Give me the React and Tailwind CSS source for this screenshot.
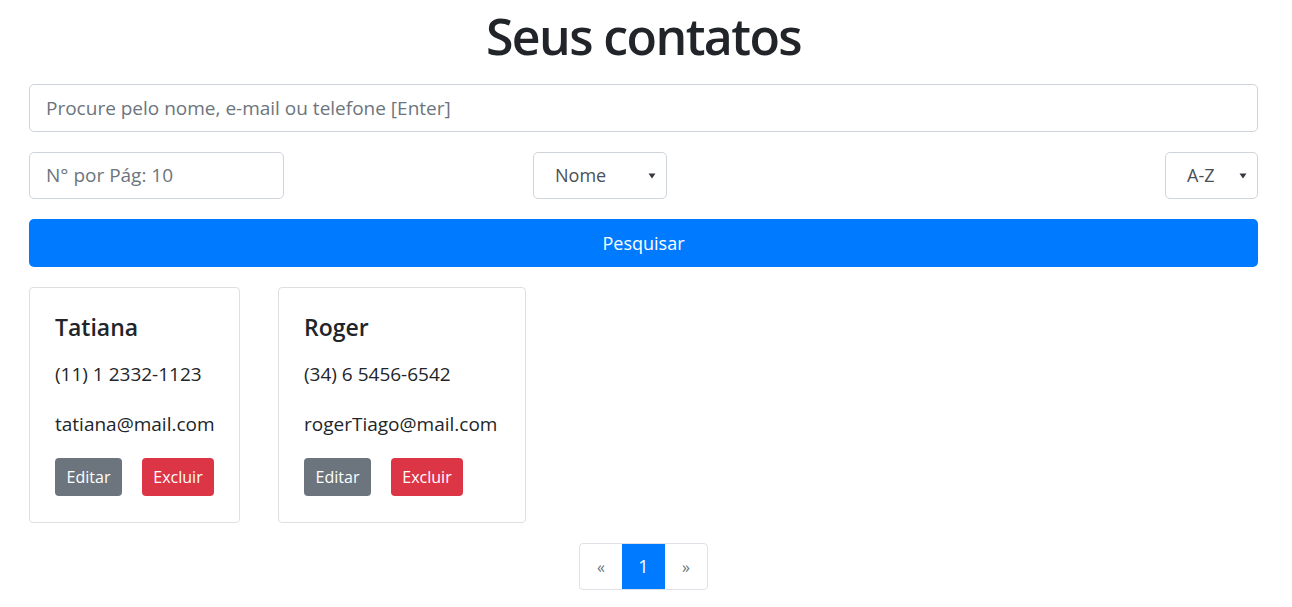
export default function App() {
  const font = { fontFamily: '"Open Sans", "Noto Sans", sans-serif' };
  const Caret = () => (
    <svg width="8" height="6" viewBox="0 0 8 6" className="shrink-0">
      <path d="M0.5 0.5 L7.5 0.5 L4 5.5 Z" fill="#343a40" />
    </svg>
  );
  const Card = ({ name, phone, email, w }) => (
    <div className={`${w} border border-[#dfdfdf] rounded-[4px] pt-[25px] pb-[26px] px-[25px] text-[#212529]`}>
      <div className="text-[23px] leading-[29px] font-semibold">{name}</div>
      <div className="mt-[17px] text-[19px] leading-[30px] whitespace-nowrap">{phone}</div>
      <div className="mt-[20px] text-[19px] leading-[30px] whitespace-nowrap">{email}</div>
      <div className="mt-[19px] flex gap-[20px]">
        <button className="h-[38px] w-[67px] rounded-[4px] bg-[#6c757d] text-white text-[16px]">Editar</button>
        <button className="h-[38px] w-[72px] rounded-[4px] bg-[#dc3545] text-white text-[16px]">Excluir</button>
      </div>
    </div>
  );
  return (
    <div className="w-[1292px] h-[607px] bg-white pl-[29px] pr-[34px] overflow-hidden" style={font}>
      <h1 className="text-center text-[50px] leading-[60px] font-semibold text-[#212529] pt-[6px] tracking-[-1.6px]">Seus contatos</h1>
      <div className="mt-[18px] h-[48px] border border-[#ced4da] rounded-[5px] flex items-center px-[16px] text-[19px] text-[#6c757d]">
        Procure pelo nome, e-mail ou telefone [Enter]
      </div>
      <div className="mt-[20px] flex items-center">
        <div className="w-[255px] h-[47px] border border-[#ced4da] rounded-[5px] flex items-center px-[16px] text-[19px] text-[#6c757d]">
          N° por Pág: 10
        </div>
        <div className="ml-[249px] w-[134px] h-[47px] border border-[#ced4da] rounded-[5px] flex items-center justify-between pl-[21px] pr-[10px] text-[18px] text-[#495057]">
          <span>Nome</span>
          <Caret />
        </div>
        <div className="ml-auto w-[93px] h-[47px] border border-[#ced4da] rounded-[5px] flex items-center justify-between pl-[21px] pr-[10px] text-[18px] text-[#495057]">
          <span>A-Z</span>
          <Caret />
        </div>
      </div>
      <button className="mt-[20px] w-full h-[48px] rounded-[5px] bg-[#007bff] text-white text-[18px]">Pesquisar</button>
      <div className="mt-[20px] flex gap-[38px] items-start">
        <Card name="Tatiana" phone="(11) 1 2332-1123" email="tatiana@mail.com" w="w-[211px]" />
        <Card name="Roger" phone="(34) 6 5456-6542" email="rogerTiago@mail.com" w="w-[248px]" />
      </div>
      <div className="mt-[20px] flex justify-center">
        <div className="flex h-[47px] border border-[#dee2e6] rounded-[4px] overflow-hidden">
          <div className="w-[42px] flex items-center justify-center text-[#6c757d] text-[16px]">«</div>
          <div className="w-[43px] flex items-center justify-center bg-[#007bff] text-white text-[18px]">1</div>
          <div className="w-[42px] flex items-center justify-center text-[#6c757d] text-[16px]">»</div>
        </div>
      </div>
    </div>
  );
}
